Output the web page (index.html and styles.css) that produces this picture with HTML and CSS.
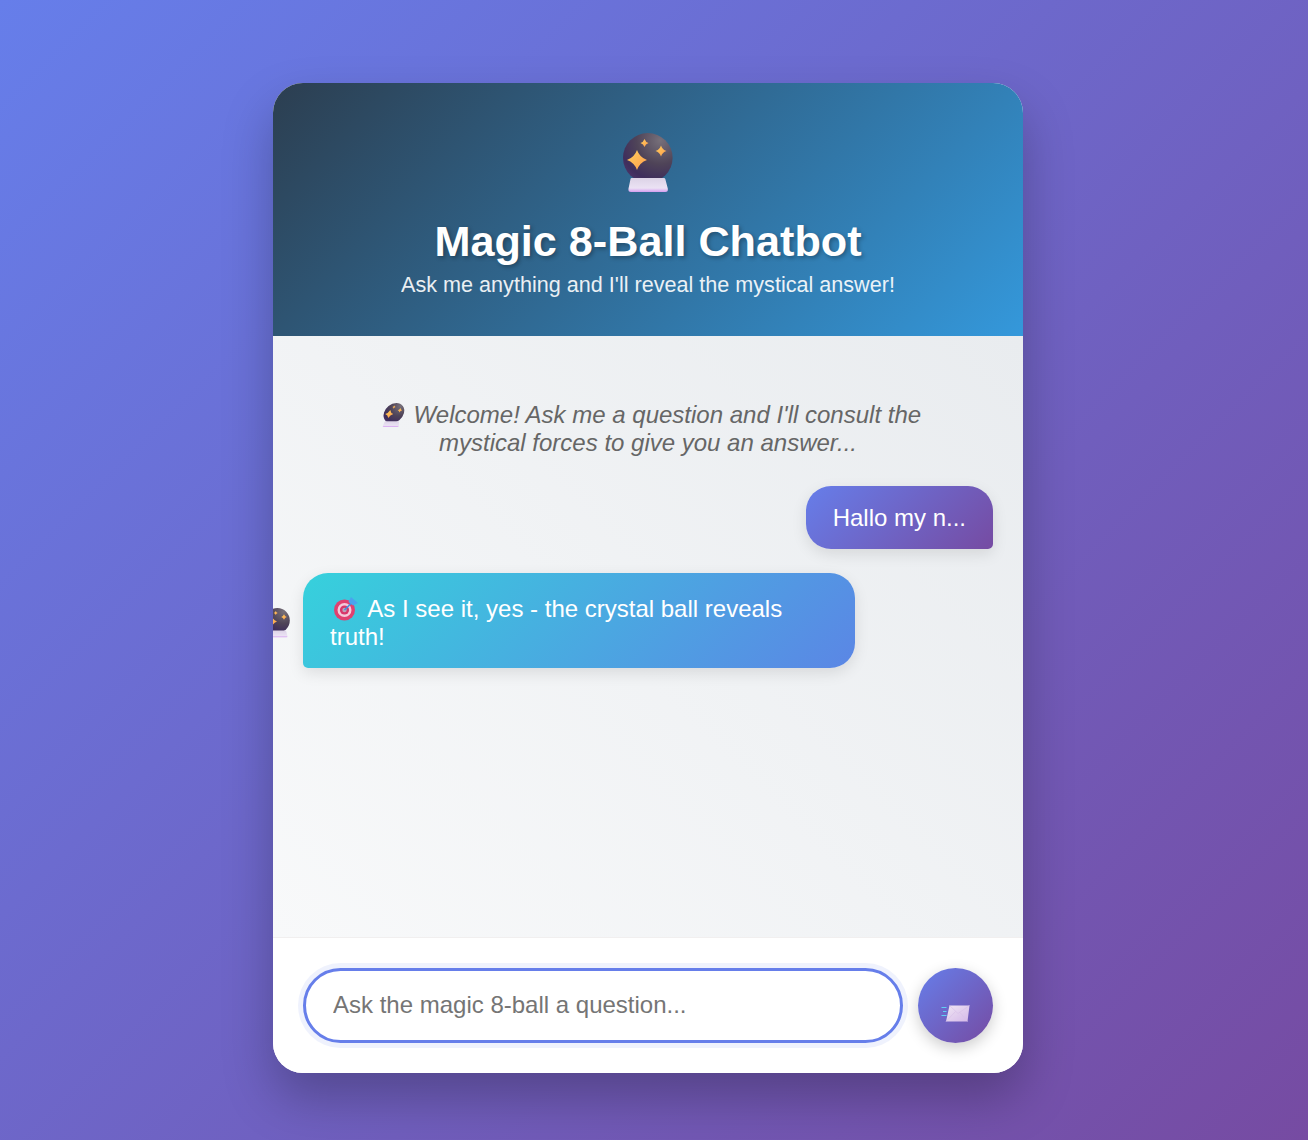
FILE: index.html
```html
<!DOCTYPE html>
<html lang="en">
<head>
<meta charset="utf-8">
<title>Magic 8-Ball Chatbot</title>
<link rel="stylesheet" href="styles.css">
</head>
<body>
<svg class="defs" width="0" height="0" aria-hidden="true">
  <defs>
    <radialGradient id="orb" cx="0.75" cy="0.15" r="0.95">
      <stop offset="0" stop-color="#77707a"/>
      <stop offset="0.5" stop-color="#4f4458"/>
      <stop offset="0.85" stop-color="#3f2e5c"/>
      <stop offset="1" stop-color="#4a3468"/>
    </radialGradient>
    <linearGradient id="base" x1="0" y1="0" x2="0" y2="1">
      <stop offset="0" stop-color="#dcd3e6"/>
      <stop offset="0.72" stop-color="#ebe2f4"/>
      <stop offset="1" stop-color="#d49df0"/>
    </linearGradient>
    <linearGradient id="spark" x1="0" y1="0" x2="1" y2="1">
      <stop offset="0" stop-color="#ffd05e"/>
      <stop offset="1" stop-color="#ff9d4c"/>
    </linearGradient>
    <linearGradient id="env" x1="0" y1="0" x2="1" y2="1">
      <stop offset="0" stop-color="#f0e6f4"/>
      <stop offset="1" stop-color="#d4b8e8"/>
    </linearGradient>
    <symbol id="ball" viewBox="0 0 50 59">
      <circle cx="24.800" cy="24.800" r="24.800" fill="url(#orb)"/>
      <path d="M8.500 45h32.500q1 0 1.300 1l2.500 9.500q.6 3.500-2.500 3.500H8q-3.100 0-2.500-3.500l2-9.500q.2-1 1-1z" fill="url(#base)"/>
      <path d="M14 17q2.600 7.400 10 10q-7.400 2.600-10 10q-2.600-7.400-10-10q7.400-2.600 10-10z" fill="url(#spark)"/>
      <path d="M38 12.500q1.400 4.100 5.500 5.500q-4.100 1.400-5.500 5.500q-1.400-4.100-5.500-5.500q4.100-1.400 5.500-5.500z" fill="url(#spark)"/>
      <path d="M21.500 6q1 3 4 4q-3 1-4 4q-1-3-4-4q3-1 4-4z" fill="url(#spark)"/>
    </symbol>
    <symbol id="target" viewBox="0 0 26 26">
      <circle cx="11.500" cy="14" r="10.500" fill="#e0406f"/>
      <circle cx="11.500" cy="14" r="7" fill="#f5c9da"/>
      <circle cx="11.500" cy="14" r="4.600" fill="#d9366a"/>
      <circle cx="11.500" cy="14" r="2.200" fill="#b9a3b8"/>
      <path d="M11.500 14 20 5.500" stroke="#3f8fe0" stroke-width="1.600" fill="none"/>
      <path d="M15.500 6 18 1l7 6-5 2.500z" fill="#4aa3ee"/>
    </symbol>
    <symbol id="mail" viewBox="0 0 30 20">
      <path d="M.5 4.500h5M2 8.500h3.500M.5 12.500h5" stroke="#5fd0f5" stroke-width="1.200" fill="none"/>
      <path d="M8.500 2.500h20l-2 16H5z" fill="url(#env)"/>
      <path d="M8.500 2.500 17 10.500 28.500 2.500M5 18.500l9.500-10M26.500 18.500l-7.500-9" stroke="#d8c2e8" stroke-width=".7" fill="none"/>
    </symbol>
  </defs>
</svg>

<main class="app">
  <header class="hero">
    <svg class="hero-ball"><use href="#ball"/></svg>
    <h1 class="title">Magic 8-Ball Chatbot</h1>
    <p class="subtitle">Ask me anything and I'll reveal the mystical answer!</p>
  </header>

  <section class="chat">
    <p class="welcome"><span class="glyph-box"><svg class="welcome-ball"><use href="#ball"/></svg></span> Welcome! Ask me a question and I'll consult the mystical forces to give you an answer...</p>

    <div class="msg msg-user">Hallo my n...</div>

    <div class="msg msg-bot">
      <svg class="avatar"><use href="#ball"/></svg>
      <span class="glyph-box"><svg class="target"><use href="#target"/></svg></span> As I see it, yes - the crystal ball reveals truth!
    </div>
  </section>

  <form class="composer">
    <input class="field" type="text" placeholder="Ask the magic 8-ball a question...">
    <button class="send" type="button" aria-label="Send"><svg class="mail"><use href="#mail"/></svg></button>
  </form>
</main>
</body>
</html>
```

FILE: styles.css
```css
* { box-sizing: border-box; }

html, body { height: 100%; }

body {
  margin: 0;
  min-height: 1140px;
  display: flex;
  align-items: flex-start;
  justify-content: center;
  padding: 83px 12px 0 0;
  background: linear-gradient(135deg, #667eea 0%, #764ba2 100%);
  font-family: "Liberation Sans", Arial, sans-serif;
}

.defs { position: absolute; }

.app {
  width: 750px;
  height: 990px;
  display: flex;
  flex-direction: column;
  border-radius: 30px;
  overflow: hidden;
  background: #fff;
  box-shadow: 0 25px 50px rgba(0, 0, 0, 0.25);
}

.hero {
  height: 253px;
  flex: none;
  display: flex;
  flex-direction: column;
  align-items: center;
  padding-top: 50px;
  color: #fff;
  background: linear-gradient(135deg, #2c3e50 0%, #3498db 100%);
}

.hero-ball { width: 50px; height: 59px; display: block; }

.title {
  margin: 24px 0 0;
  font-size: 43.2px;
  font-weight: 700;
  line-height: 51px;
  text-shadow: 2px 2px 4px rgba(0, 0, 0, 0.3);
}

.subtitle {
  margin: 5px 0 0;
  font-size: 21.6px;
  line-height: 26px;
  opacity: 0.9;
}

.chat {
  flex: 1;
  display: flex;
  flex-direction: column;
  padding: 65px 30px 30px;
  background: linear-gradient(45deg, #f8f9fa 0%, #e9ecef 100%);
}

.welcome {
  margin: 0 0 29px;
  padding: 0 50px;
  text-align: center;
  font-size: 24px;
  line-height: 28px;
  font-style: italic;
  color: #666;
}

.glyph-box {
  display: inline-block;
  width: 32px;
  height: 28px;
  vertical-align: top;
  text-align: center;
}

.welcome-ball {
  width: 21px;
  height: 24px;
  margin: 2px 0 0 6px;
  transform: skewX(-14deg);
}

.msg {
  font-size: 24px;
  line-height: 28px;
  color: #fff;
  box-shadow: 0 5px 15px rgba(0, 0, 0, 0.1);
}

.msg-user {
  align-self: flex-end;
  height: 63px;
  padding: 18px 27px;
  margin-bottom: 24px;
  border-radius: 25px 25px 5px 25px;
  background: linear-gradient(135deg, #667eea 0%, #764ba2 100%);
}

.msg-bot {
  position: relative;
  align-self: flex-start;
  width: 552px;
  height: 95px;
  padding: 22px 27px 17px;
  border-radius: 25px 25px 25px 5px;
  background: linear-gradient(135deg, #36d1dc 0%, #5b86e5 100%);
}

.avatar {
  position: absolute;
  left: -38px;
  top: 35px;
  width: 25px;
  height: 29.500px;
}

.target {
  display: block;
  width: 26px;
  height: 26px;
  margin: 1px 0 0 3px;
}

.composer {
  flex: none;
  height: 136px;
  display: flex;
  align-items: center;
  gap: 15px;
  padding: 0 30px 1px;
  background: #fff;
  border-top: 1px solid #f1efef;
}

.field {
  flex: 1;
  height: 75px;
  padding: 0 27px;
  font-family: inherit;
  font-size: 24px;
  color: #333;
  background: #fff;
  border: 3px solid #667eea;
  border-radius: 38px;
  outline: none;
  box-shadow: 0 0 0 5px rgba(102, 126, 234, 0.1);
}

.field::placeholder { color: #757575; }

.send {
  flex: none;
  width: 75px;
  height: 75px;
  padding: 0;
  display: flex;
  align-items: center;
  justify-content: center;
  border: 0;
  border-radius: 50%;
  background: linear-gradient(135deg, #667eea 0%, #764ba2 100%);
  box-shadow: 0 5px 15px rgba(0, 0, 0, 0.2);
}

.mail { width: 30px; height: 20px; margin-top: 15px; }
```
